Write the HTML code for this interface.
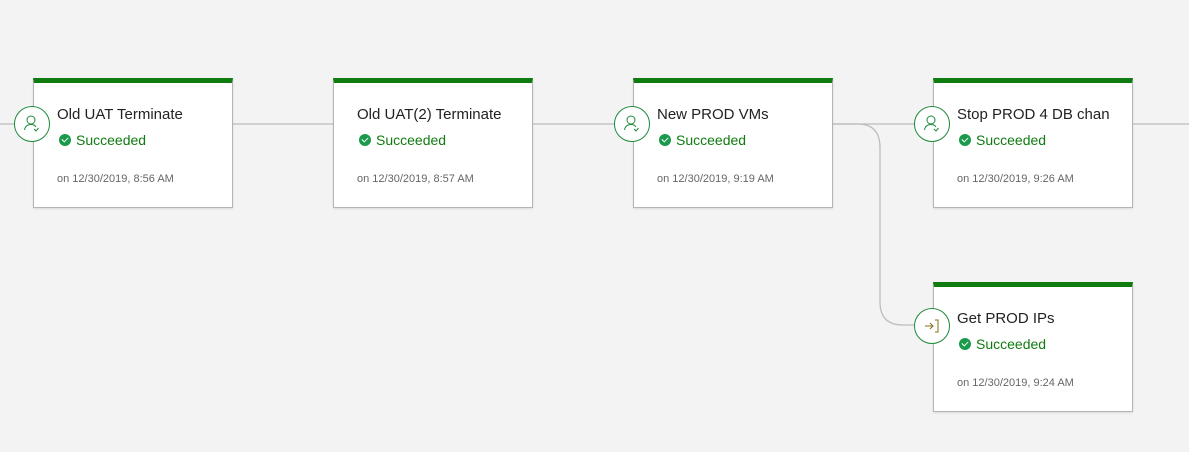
<!DOCTYPE html>
<html><head><style>
body{margin:0;width:1189px;height:452px;background:#f3f3f3;position:relative;overflow:hidden;font-family:"Liberation Sans",sans-serif}
.card{position:absolute;width:198px;height:124px;background:#fff;border:1px solid #b4b4b4;border-top:5px solid #107c10;box-shadow:0 1px 2px rgba(0,0,0,.1)}
.t{position:absolute;left:23px;top:23px;font-size:15px;color:#222;white-space:nowrap;overflow:hidden;width:172px}
.s{position:absolute;left:25px;top:49px;font-size:14px;color:#107c10}
.s i{display:inline-block;width:12px;height:12px;border-radius:50%;background:#1a9a4a;vertical-align:-1px;margin-right:5px;position:relative}
.s i:after{content:"";position:absolute;left:3px;top:2.5px;width:5px;height:3px;border-left:1.5px solid #fff;border-bottom:1.5px solid #fff;transform:rotate(-45deg)}
.d{position:absolute;left:23px;top:90px;font-size:11px;color:#666}
.c{position:absolute;width:34px;height:34px;border:1px solid #1e8a3a;border-radius:50%;background:#fff}
</style></head><body>
<svg style="position:absolute;left:0;top:0" width="1189" height="452"><g fill="none" stroke="#bdbdbd" stroke-width="1.3"><path d="M0 124H1189"/><path d="M833 124H858Q880 124 880 148V302Q880 325 903 325H916"/></g></svg>
<div class="card" style="left:33px;top:78px"><div class="t">Old UAT Terminate</div><div class="s"><i></i>Succeeded</div><div class="d">on 12/30/2019, 8:56 AM</div></div>
<div class="card" style="left:333px;top:78px"><div class="t">Old UAT(2) Terminate</div><div class="s"><i></i>Succeeded</div><div class="d">on 12/30/2019, 8:57 AM</div></div>
<div class="card" style="left:633px;top:78px"><div class="t">New PROD VMs</div><div class="s"><i></i>Succeeded</div><div class="d">on 12/30/2019, 9:19 AM</div></div>
<div class="card" style="left:933px;top:78px"><div class="t">Stop PROD 4 DB chan</div><div class="s"><i></i>Succeeded</div><div class="d">on 12/30/2019, 9:26 AM</div></div>
<div class="card" style="left:933px;top:282px"><div class="t">Get PROD IPs</div><div class="s"><i></i>Succeeded</div><div class="d">on 12/30/2019, 9:24 AM</div></div>
<svg width="0" height="0"><defs><g id="p"><g fill="none" stroke="#1e8a3a" stroke-width="1"><circle cx="16" cy="13" r="4"/><path d="M9.5 23Q10.5 17.5 16 17.5Q19.5 17.5 21 20M19 22l2 2 2.5-3"/></g></g></defs></svg>
<div class="c" style="left:14px;top:106px"><svg width="34" height="34"><use href="#p" x="0" y="0"/></svg></div>
<div class="c" style="left:614px;top:106px"><svg width="34" height="34"><use href="#p" x="0" y="0"/></svg></div>
<div class="c" style="left:914px;top:106px"><svg width="34" height="34"><use href="#p" x="0" y="0"/></svg></div>
<div class="c" style="left:914px;top:308px"><svg width="34" height="34"><g fill="none" stroke="#8a6d1a" stroke-width="1"><path d="M10 17H18M15 14l3 3-3 3M20 11H23V23H20"/></g></svg></div>
</body></html>
